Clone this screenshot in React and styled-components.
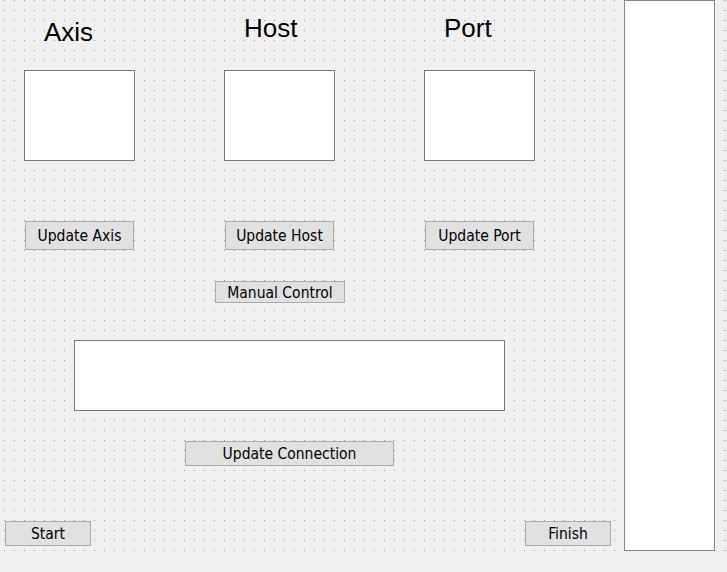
import React from "react";
import styled, { createGlobalStyle } from "styled-components";

const GlobalStyle = createGlobalStyle`
  html, body {
    margin: 0;
    padding: 0;
    background: #f0f0f0;
  }
  body {
    width: 727px;
    height: 572px;
    overflow: hidden;
    font-family: "Liberation Sans", Arial, sans-serif;
  }
`;

// Qt Designer style dotted grid: dot every 10px, first column at x=4
const Canvas = styled.div`
  display: flex;
  width: 727px;
  height: 551px;
  background:
    linear-gradient(90deg, #f0f0f0 4px, transparent 4px 5px, #f0f0f0 5px) 0 0 / 10px 10px,
    linear-gradient(#9a9a9a 1px, transparent 1px) 0 0 / 10px 10px,
    #f0f0f0;
`;

const Form = styled.div`
  display: flex;
  flex-direction: column;
  width: 624px;
`;

const TopRow = styled.div`
  display: flex;
  gap: 89px;
  padding-left: 24px;
`;

const Field = styled.div`
  display: flex;
  flex-direction: column;
  width: 111px;
`;

const LabelArea = styled.div`
  box-sizing: border-box;
  height: 70px;
  padding-top: ${(p) => p.$top}px;
  padding-left: 20px;
`;

const Title = styled.div`
  font-size: 26px;
  line-height: 30px;
  color: #000;
`;

const LineEdit = styled.div`
  box-sizing: border-box;
  width: ${(p) => p.$w}px;
  height: ${(p) => p.$h}px;
  margin-left: ${(p) => p.$left || 0}px;
  margin-top: ${(p) => p.$mt || 0}px;
  background: #fff;
  border: 1px solid #7a7a7a;
`;

const Button = styled.button`
  box-sizing: border-box;
  align-self: flex-start;
  width: ${(p) => p.$w}px;
  height: ${(p) => p.$h}px;
  margin-left: ${(p) => p.$left || 0}px;
  margin-top: ${(p) => p.$mt || 0}px;
  padding: 3px 0 0;
  background: #e1e1e1;
  border: 1px solid #adadad;
  border-radius: 0;
  font-family: "DejaVu Sans Condensed", "DejaVu Sans", sans-serif;
  font-size: 15.5px;
  color: #000;
  line-height: 1;
`;

const BottomRow = styled.div`
  display: flex;
  gap: 434px;
  padding-left: 5px;
  margin-top: 55px;
`;

const ListWidget = styled.div`
  box-sizing: border-box;
  width: 91px;
  height: 551px;
  background: #fff;
  border: 1px solid #828790;
`;

const fields = [
  { name: "Axis", top: 17 },
  { name: "Host", top: 13 },
  { name: "Port", top: 13 },
];

export default function App() {
  return (
    <>
      <GlobalStyle />
      <Canvas>
        <Form>
          <TopRow>
            {fields.map((f) => (
              <Field key={f.name}>
                <LabelArea $top={f.top}>
                  <Title>{f.name}</Title>
                </LabelArea>
                <LineEdit $w={111} $h={91} />
                <Button $w={109} $h={29} $left={1} $mt={60}>
                  Update {f.name}
                </Button>
              </Field>
            ))}
          </TopRow>
          <Button $w={130} $h={22} $left={215} $mt={31}>
            Manual Control
          </Button>
          <LineEdit $w={431} $h={71} $left={74} $mt={37} />
          <Button $w={209} $h={25} $left={185} $mt={30}>
            Update Connection
          </Button>
          <BottomRow>
            <Button $w={86} $h={25}>Start</Button>
            <Button $w={86} $h={25}>Finish</Button>
          </BottomRow>
        </Form>
        <ListWidget />
      </Canvas>
    </>
  );
}
